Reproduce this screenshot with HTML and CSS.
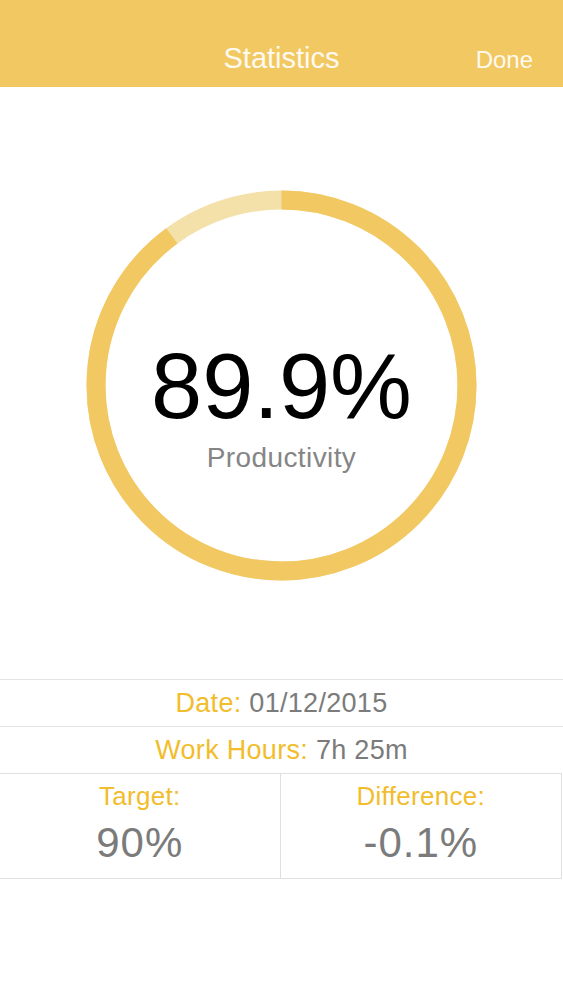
FILE: index.html
```html
<!DOCTYPE html>
<html>
<head>
    <meta charset="utf-8">
    <title>Statistics</title>
    <link rel="stylesheet" href="styles.css">
</head>
<body>
    <div class="navbar">
        <span></span>
        <span class="nav-title">Statistics</span>
        <span class="nav-done">Done</span>
    </div>

    <div class="ring-wrap">
        <div class="ring">
            <svg class="ring-svg" width="391" height="391" viewBox="0 0 391 391">
                <circle cx="195.5" cy="195.5" r="185.5" fill="none" stroke="#f4e1aa" stroke-width="19"/>
                <!-- 89.9% of 2*pi*185.5 = 1047.8 -->
                <circle cx="195.5" cy="195.5" r="185.5" fill="none" stroke="#f2c862" stroke-width="19"
                        stroke-dasharray="1047.8 1165.5" transform="rotate(-90 195.5 195.5)"/>
            </svg>
            <div class="ring-text">
                <div class="percent">89.9%</div>
                <div class="caption">Productivity</div>
            </div>
        </div>
    </div>

    <div class="details">
        <div class="row"><span class="label">Date:</span>&nbsp;<span class="value">01/12/2015</span></div>
        <div class="row"><span class="label">Work Hours:</span>&nbsp;<span class="value">7h 25m</span></div>
        <div class="split">
            <div class="cell">
                <div class="label">Target:</div>
                <div class="big-value">90%</div>
            </div>
            <div class="cell">
                <div class="label">Difference:</div>
                <div class="big-value">-0.1%</div>
            </div>
        </div>
    </div>
</body>
</html>
```

FILE: styles.css
```css
body {
    margin: 0;
    font-family: "Liberation Sans", Arial, sans-serif;
    background: #fff;
}
.navbar {
    height: 87px;
    box-sizing: border-box;
    padding-top: 44px;
    background-color: #f2c862;
    display: grid;
    grid-template-columns: 1fr auto 1fr;
    align-items: baseline;
    color: #fffaf0;
}
.nav-title {
    font-size: 29px;
    line-height: 1;
}
.nav-done {
    justify-self: end;
    margin-right: 30px;
    font-size: 24px;
    line-height: 1;
}
.ring-wrap {
    display: flex;
    justify-content: center;
    padding: 103px 0 98px;
}
.ring {
    display: grid;
    width: 391px;
    height: 391px;
}
.ring-svg,
.ring-text {
    grid-area: 1 / 1;
}
.ring-text {
    align-self: start;
    margin-top: 150px;
    text-align: center;
}
.percent {
    font-size: 92px;
    line-height: 1;
    color: #000;
}
.caption {
    margin-top: 12px;
    font-size: 28px;
    letter-spacing: 0.4px;
    line-height: 1;
    color: #858585;
}
.row {
    height: 46px;
    border-top: 1px solid #e4e4e4;
    display: flex;
    align-items: center;
    justify-content: center;
    font-size: 27px;
    letter-spacing: 0.3px;
}
.label {
    color: #f1bd2c;
    line-height: 1;
}
.value {
    color: #7b7b7b;
    line-height: 1;
}
.split {
    display: grid;
    grid-template-columns: 1fr 1fr;
    margin-right: 1px;
    border-top: 1px solid #e0e0e0;
    border-bottom: 1px solid #e0e0e0;
    border-right: 1px solid #e0e0e0;
}
.cell {
    padding: 9px 0 14px;
    text-align: center;
    font-size: 26px;
    letter-spacing: 0.3px;
}
.cell:first-child {
    border-right: 1px solid #e0e0e0;
}
.big-value {
    margin-top: 13px;
    font-size: 42px;
    letter-spacing: 1px;
    line-height: 1;
    color: #7b7b7b;
}
```
